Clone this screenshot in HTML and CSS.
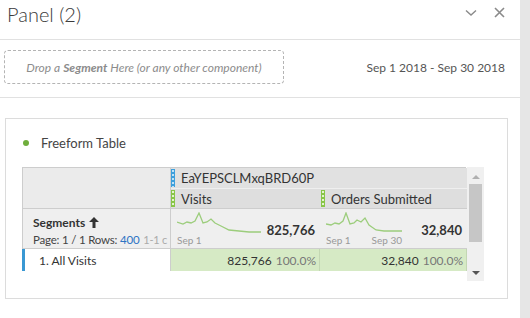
FILE: index.html
```html
<!DOCTYPE html>
<html>
<head>
    <title>Panel</title>
    <meta charset="UTF-8">
    <link rel="stylesheet" href="styles.css">
</head>
<body>
    <div class="main">
        <div class="panel-head">
            <h1>Panel (2)</h1>
            <div class="head-icons">
                <svg width="12" height="8" viewBox="0 0 12 8"><path d="M1 1.5 L6 6 L11 1.5" fill="none" stroke="#8a8a8a" stroke-width="1.4"/></svg>
                <svg width="11" height="11" viewBox="0 0 11 11"><path d="M1 1 L10 10 M10 1 L1 10" fill="none" stroke="#8a8a8a" stroke-width="1.6"/></svg>
            </div>
        </div>

        <div class="panel-bar">
            <div class="drop-zone">Drop a <b>Segment</b> Here (or any other component)</div>
            <div class="date-range">Sep 1 2018 - Sep 30 2018</div>
        </div>

        <div class="panel-body">
            <div class="card">
                <div class="card-title"><span class="dot"></span>Freeform Table</div>

                <div class="table-wrap">
                    <div class="table">
                        <div class="corner"></div>
                        <div class="seg-head"><span class="tag blue"></span>EaYEPSCLMxqBRD60P</div>
                        <div class="metric-head"><span class="tag green"></span>Visits</div>
                        <div class="metric-head"><span class="tag green"></span>Orders Submitted</div>

                        <div class="summary-label">
                            <div class="seg-title">Segments
                                <svg width="10" height="11" viewBox="0 0 10 11"><path d="M5 0 L10 5 L6.5 5 L6.5 11 L3.5 11 L3.5 5 L0 5 Z" fill="#333"/></svg>
                            </div>
                            <div class="page-info">Page: 1 / 1 Rows: <span class="rows">400</span> <span class="range">1-1 c</span></div>
                        </div>
                        <div class="summary-cell">
                            <div class="spark">
                                <svg width="84" height="22" viewBox="0 0 84 22"><polyline points="0,10 6,12 10,10 14,11 18,9 22,1 26,11 30,10 34,7 38,11 44,14 52,18 62,19 72,20 84,20" fill="none" stroke="#9ccd7c" stroke-width="1.3"/></svg>
                                <div class="spark-dates"><span>Sep 1</span></div>
                            </div>
                            <div class="total">825,766</div>
                        </div>
                        <div class="summary-cell">
                            <div class="spark short">
                                <svg width="76" height="22" viewBox="0 0 76 22"><polyline points="0,12 5,13 9,11 13,12 17,9 20,1 24,12 28,11 31,8 35,10 39,6 43,13 50,18 58,19 66,19 76,19" fill="none" stroke="#9ccd7c" stroke-width="1.3"/></svg>
                                <div class="spark-dates"><span>Sep 1</span><span>Sep 30</span></div>
                            </div>
                            <div class="total">32,840</div>
                        </div>

                        <div class="row-label">1. All Visits</div>
                        <div class="value-cell">825,766 <span class="pct">100.0%</span></div>
                        <div class="value-cell">32,840 <span class="pct">100.0%</span></div>
                    </div>

                    <div class="scrollbar">
                        <span class="arrow up"></span>
                        <div class="thumb"></div>
                        <span class="arrow down"></span>
                    </div>
                </div>
            </div>
        </div>
    </div>
    <div class="rail"></div>
</body>
</html>
```

FILE: styles.css
```css
body {
    font-family: Lato, 'Liberation Sans', sans-serif;
    margin: 0;
    padding: 0;
    background: #fff;
    color: #333;
    display: flex;
    height: 318px;
    overflow: hidden;
}

.main {
    width: 520px;
}

.rail {
    width: 10px;
    background: #e6e6e6;
}

.panel-head {
    height: 39px;
    border-bottom: 1px solid #e1e1e1;
    display: flex;
    align-items: center;
    justify-content: space-between;
    padding: 0 15px 0 7px;
}

h1 {
    margin: 0;
    font-size: 20px;
    font-weight: 300;
    color: #3a3a3a;
    margin-top: -11px;
}

.head-icons {
    display: flex;
    align-items: center;
    gap: 17px;
    margin-top: -14px;
}

.panel-bar {
    height: 57px;
    border-bottom: 1px solid #e1e1e1;
    display: flex;
    align-items: center;
    justify-content: space-between;
    padding: 0 15px 0 4px;
}

.drop-zone {
    width: 278px;
    height: 32px;
    border: 1px dashed #b4b4b4;
    border-radius: 4px;
    display: flex;
    align-items: center;
    justify-content: center;
    font-style: italic;
    font-size: 12px;
    color: #8c8c8c;
    margin-top: -3px;
}

.drop-zone b {
    font-weight: 700;
    margin: 0 3px;
}

.date-range {
    font-size: 12px;
    color: #555;
    margin-top: -2px;
}

.panel-body {
    padding: 20px 0 0 5px;
}

.card {
    width: 485px;
    height: 179px;
    border: 1px solid #dcdcdc;
    padding: 0 0 0 16px;
    box-sizing: content-box;
}

.card-title {
    display: flex;
    align-items: center;
    height: 18px;
    margin: 15px 0 15px 0;
    font-size: 13px;
    color: #444;
}

.dot {
    width: 6px;
    height: 6px;
    border-radius: 50%;
    background: #6fae3c;
    margin: 0 12px 0 1px;
}

.table-wrap {
    display: flex;
    gap: 1px;
}

.table {
    display: grid;
    grid-template-columns: 148px 149px 147px;
    grid-template-rows: 21px 20px 40px 22px;
    width: 444px;
    border: 1px solid #cdcdcd;
    border-right: none;
    box-sizing: border-box;
    height: 104px;
    font-size: 12px;
}

.corner {
    grid-row: 1 / 3;
    background: #ebebeb;
    border-right: 1px solid #cdcdcd;
    border-bottom: 1px solid #cdcdcd;
}

.seg-head {
    grid-column: 2 / 4;
    background: #e1e1e1;
    border-bottom: 1px solid #efefef;
    display: flex;
    align-items: center;
    font-size: 13px;
    color: #333;
}

.metric-head {
    background: #dedede;
    border-bottom: 1px solid #cdcdcd;
    display: flex;
    align-items: center;
    font-size: 13px;
    color: #333;
}

.metric-head + .metric-head .tag {
    margin-left: 1px;
}

.tag {
    width: 4px;
    align-self: stretch;
    margin: 1px 6px 1px 0;
    background-size: 4px 4px;
}

.tag.blue {
    background-color: #3d9fdc;
    background-image: radial-gradient(circle, #bfe2f7 0.9px, transparent 1.1px);
}

.tag.green {
    background-color: #88c548;
    background-image: radial-gradient(circle, #e2f3cf 0.9px, transparent 1.1px);
}

.summary-label {
    background: #efefef;
    border-right: 1px solid #cdcdcd;
    border-bottom: 1px solid #cdcdcd;
    padding: 6px 0 0 10px;
    overflow: hidden;
    white-space: nowrap;
}

.seg-title {
    font-weight: 700;
    font-size: 12px;
    color: #333;
    display: flex;
    align-items: center;
    gap: 4px;
}

.page-info {
    margin-top: 3px;
    font-size: 11.5px;
    letter-spacing: -0.2px;
    color: #444;
}

.rows {
    color: #2d74c4;
}

.range {
    color: #aaa;
    margin-left: 1px;
    font-size: 11px;
}

.summary-cell {
    background: #efefef;
    border-bottom: 1px solid #cdcdcd;
    display: flex;
    justify-content: space-between;
    padding: 0 5px 0 6px;
}

.spark {
    display: flex;
    flex-direction: column;
    width: 84px;
    padding-top: 3px;
}

.spark.short {
    width: 76px;
}

.spark-dates {
    display: flex;
    justify-content: space-between;
    font-size: 10px;
    color: #999;
    margin-top: 0;
}

.total {
    align-self: center;
    font-weight: 700;
    font-size: 13px;
    color: #333;
    margin-top: 2px;
}

.row-label {
    background: #fff;
    border-left: 3px solid #3998d3;
    margin-left: -1px;
    border-right: 1px solid #cdcdcd;
    display: flex;
    align-items: center;
    padding-left: 14px;
    font-size: 12px;
    color: #333;
}

.value-cell {
    background: #d6eac5;
    border-right: 1px solid #c3d7b3;
    display: flex;
    align-items: center;
    justify-content: flex-end;
    padding-right: 3px;
    font-size: 12px;
    color: #333;
    gap: 4px;
}

.pct {
    color: #777;
}

.scrollbar {
    width: 17px;
    height: 114px;
    background: #f0f0f0;
    display: flex;
    flex-direction: column;
    align-items: center;
}

.thumb {
    width: 13px;
    height: 58px;
    background: #c6c6c6;
    margin-top: 5px;
}

.arrow {
    width: 0;
    height: 0;
    border-left: 4px solid transparent;
    border-right: 4px solid transparent;
}

.arrow.up {
    border-bottom: 4px solid #b0b0b0;
    margin-top: 8px;
}

.arrow.down {
    border-top: 4px solid #555;
    margin-top: auto;
    margin-bottom: 6px;
}
```
